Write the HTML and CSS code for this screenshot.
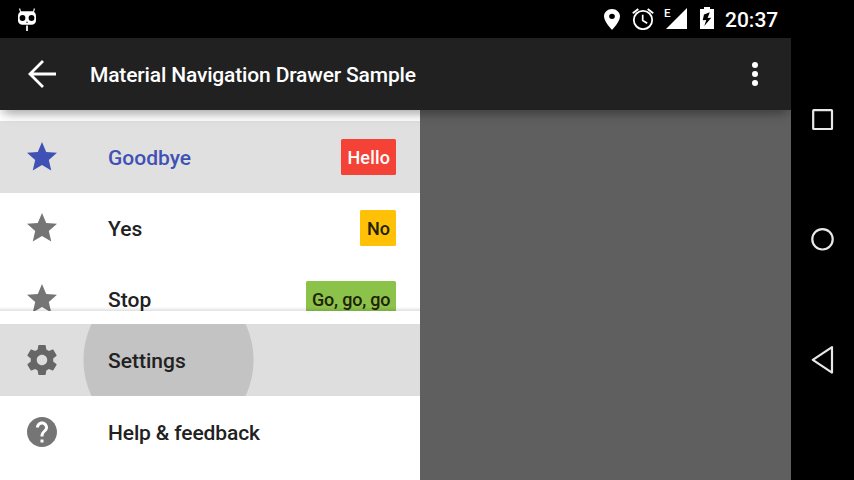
FILE: index.html
```html
<!DOCTYPE html>
<html lang="en">
<head>
<meta charset="utf-8">
<title>Material Navigation Drawer Sample</title>
<link rel="stylesheet" href="styles.css">
</head>
<body>
<svg width="0" height="0" class="defs">
  <symbol id="star" viewBox="0 0 24 24"><path d="M12 17.27L18.18 21l-1.64-7.03L22 9.24l-7.19-.61L12 2 9.19 8.63 2 9.24l5.46 4.73L5.82 21z"/></symbol>
</svg>
<div class="screen">
  <header class="status">
    <svg class="cid" viewBox="0 0 20 26">
      <path d="M2.500 1.500L4 6M17.500 1.500L16 6" stroke="#ddd" stroke-width="1.300" fill="none"/>
      <path d="M4.500 4.200h11Q19 5 19 9.500v4Q19 17 15 17.800H5Q1 17 1 13.500v-4Q1 5 4.500 4.200z" fill="#fff"/>
      <circle cx="5.500" cy="11" r="2.900"/><circle cx="14.500" cy="11" r="2.900"/>
      <path d="M9 15.700L10 14.300l1 1.400z"/>
      <path d="M10 18.500v5.500" stroke="#ddd" stroke-width="2"/>
    </svg>
    <div class="tray">
      <svg class="pin" viewBox="5 2 14 20" preserveAspectRatio="none"><path d="M12 2C8.130 2 5 5.130 5 9c0 5.250 7 13 7 13s7-7.750 7-13c0-3.870-3.130-7-7-7zm0 9.500a2.500 2.500 0 1 1 0-5 2.500 2.500 0 0 1 0 5z"/></svg>
      <svg class="alarm" viewBox="0 0 22 22"><g fill="none" stroke="#fff"><circle cx="11" cy="12" r="9.200" stroke-width="1.800"/><path d="M10.700 6.700v5.800l4.500 2.700" stroke-width="1.700"/><path d="M.8 5.200L6.300 1M21.200 5.200L15.700 1" stroke-width="2"/></g></svg>
      <div class="signal"><span>E</span><svg viewBox="0 0 21 21"><path d="M21 0v21H0z"/></svg></div>
      <svg class="battery" viewBox="0 0 14 22"><path d="M4 0h6v2h4v20H0V2h4z"/><path d="M9.800 5.200L4 7.500 2.700 13.200l3.500-.3L4.300 19l7-8.200-3.700.2z" fill="#000"/></svg>
      <span class="clock">20:37</span>
    </div>
  </header>
  <div class="app">
    <div class="toolbar">
      <svg class="back" viewBox="0 0 30 30"><path d="M28 15H2.500M15 2l-13 13 13 13" fill="none" stroke="#fff" stroke-width="2.800"/></svg>
      <h1>Material Navigation Drawer Sample</h1>
      <svg class="more" viewBox="0 0 6 24"><circle cx="3" cy="3" r="3"/><circle cx="3" cy="12" r="3"/><circle cx="3" cy="21" r="3"/></svg>
    </div>
    <div class="content">
      <nav class="drawer">
        <div class="list">
          <a class="item selected"><svg class="icon"><use href="#star"/></svg><span class="label">Goodbye</span><span class="badge red">Hello</span></a>
          <a class="item second"><svg class="icon"><use href="#star"/></svg><span class="label">Yes</span><span class="badge amber">No</span></a>
          <a class="item"><svg class="icon"><use href="#star"/></svg><span class="label">Stop</span><span class="badge green">Go, go, go</span></a>
        </div>
        <div class="footer">
          <a class="item pressed"><svg class="icon" viewBox="0 0 24 24"><path d="M19.430 12.980c.04-.32.070-.64.070-.98s-.03-.66-.07-.98l2.110-1.650c.19-.15.240-.42.120-.64l-2-3.460c-.12-.22-.39-.3-.61-.22l-2.490 1c-.52-.4-1.080-.73-1.690-.98l-.38-2.650C14.460 2.180 14.250 2 14 2h-4c-.25 0-.46.180-.49.420l-.38 2.650c-.61.250-1.170.590-1.690.980l-2.490-1c-.23-.09-.49 0-.61.220l-2 3.460c-.13.220-.07.490.12.640l2.110 1.650c-.04.320-.07.650-.07.980s.03.660.07.980l-2.110 1.650c-.19.150-.24.420-.12.640l2 3.460c.12.220.39.300.61.220l2.490-1c.52.400 1.080.730 1.690.980l.38 2.650c.03.240.24.420.49.420h4c.25 0 .46-.18.490-.42l.38-2.650c.61-.25 1.170-.59 1.690-.98l2.490 1c.23.090.49 0 .61-.22l2-3.460c.12-.22.070-.49-.12-.64l-2.110-1.650zM12 15.500c-1.930 0-3.500-1.570-3.500-3.500s1.570-3.500 3.500-3.500 3.500 1.570 3.500 3.500-1.570 3.500-3.500 3.500z"/></svg><span class="label">Settings</span></a>
          <a class="item help"><svg class="icon" viewBox="0 0 24 24"><path d="M12 2C6.480 2 2 6.480 2 12s4.480 10 10 10 10-4.480 10-10S17.520 2 12 2zm1 17h-2v-2h2v2zm2.070-7.750l-.9.920C13.450 12.900 13 13.500 13 15h-2v-.5c0-1.100.45-2.100 1.170-2.830l1.240-1.260c.37-.36.590-.86.590-1.410 0-1.100-.9-2-2-2s-2 .9-2 2H8c0-2.210 1.790-4 4-4s4 1.790 4 4c0 .880-.36 1.680-.93 2.250z"/></svg><span class="label">Help &amp; feedback</span></a>
        </div>
      </nav>
    </div>
  </div>
</div>
<aside class="navbar">
  <svg viewBox="0 0 24 24"><rect x="2.200" y="2.200" width="18.800" height="18.800" rx=".5"/></svg>
  <svg viewBox="0 0 24 24"><circle cx="11.500" cy="12.300" r="10.200"/></svg>
  <svg class="tri" viewBox="0 0 24 28"><path d="M21 1.200v25.400L1.800 13.800z"/></svg>
</aside>
</body>
</html>
```
FILE: styles.css
```css
* { box-sizing: border-box; }
body {
  margin: 0;
  width: 854px;
  height: 480px;
  display: flex;
  overflow: hidden;
  background: #000;
  font: 500 21px/24px Roboto, sans-serif;
}
svg { display: block; flex: none; }
.defs { position: absolute; }
.screen { width: 791px; display: flex; flex-direction: column; }

.status {
  height: 38px;
  padding: 0 12px 0 17px;
  display: flex;
  align-items: flex-start;
  justify-content: space-between;
  color: #fff;
}
.cid { width: 20px; height: 26px; margin-top: 6.5px; }
.tray { display: flex; align-items: flex-start; fill: #fff; }
.pin { width: 16px; height: 21px; margin: 9px 12px 0 0; }
.alarm { width: 22px; height: 22px; margin: 8px 10px 0 0; }
.signal { display: flex; margin: 8px 13px 0 0; }
.signal span { width: 2px; font-size: 11.5px; line-height: 11px; }
.signal svg { width: 21px; height: 21px; }
.battery { width: 14px; height: 22px; margin: 7px 11px 0 0; }
.clock { width: 54px; margin-top: 9px; white-space: nowrap; line-height: 22px; }

.app { flex: 1; display: flex; flex-direction: column; }
.toolbar {
  height: 72px;
  padding: 0 33px 0 27px;
  display: flex;
  align-items: center;
  background: #212121;
  color: #fff;
}
.back { width: 30px; height: 30px; margin-left: 1px; }
.toolbar h1 {
  margin: 2px 0 0 32px;
  flex: 1;
  font: inherit;
  letter-spacing: -0.16px;
}
.more { width: 6px; height: 24px; fill: #fff; }

.content {
  position: relative;
  flex: 1;
  background: #5f5f5f;
  overflow: hidden;
}
/* Toolbar shadow, thinner towards both ends */
.content::before {
  content: "";
  position: absolute;
  top: -10px;
  left: 5px;
  right: 5px;
  height: 10px;
  z-index: 1;
  box-shadow: 0 2px 12px 1px rgba(0,0,0,.36), 0 0 4px 5px rgba(0,0,0,.04);
}
.drawer {
  width: 420px;
  height: 370px;
  display: flex;
  flex-direction: column;
  background: #fff;
  color: #212121;
}
.list { height: 201px; padding-top: 11px; overflow: hidden; position: relative; }
.list::after {
  content: "";
  position: absolute;
  inset: auto 0 0;
  height: 4px;
  background: linear-gradient(rgba(0,0,0,0), rgba(0,0,0,.12));
}
.footer { padding-top: 13px; }
.item {
  height: 72px;
  padding: 0 24px;
  display: flex;
  align-items: center;
}
.second { height: 70px; }
.icon { width: 36px; height: 36px; fill: #757575; }
.label { margin-left: 48px; flex: 1; padding-top: 2px; }
.help .label { letter-spacing: -0.13px; }
.selected { background: #e0e0e0; color: #3f51b5; }
.selected .icon { fill: #3f51b5; }
.badge {
  height: 36px;
  padding: 1px 6px 0;
  border-radius: 1.5px;
  font-size: 18px;
  line-height: 36px;
  min-width: 36px;
  text-align: right;
  white-space: nowrap;
  color: #212106;
}
.red { width: 55px; background: #f44336; color: #fff; letter-spacing: 0.15px; }
.amber { background: #ffc107; }
.green { width: 90px; background: #8bc34a; letter-spacing: -0.2px; }
.pressed {
  background: radial-gradient(circle at 168.500px 36px, #c3c3c3 84.500px, #dedede 85.500px);
}
.pressed .icon { fill: #666; }

.navbar {
  flex: 1;
  display: flex;
  flex-direction: column;
  align-items: center;
  justify-content: space-between;
  padding: 108px 0 106px;
}
.navbar svg { width: 24px; height: 24px; fill: none; stroke: #e8e8e8; stroke-width: 2.2; stroke-linejoin: round; }
.navbar .tri { height: 28px; }
```
